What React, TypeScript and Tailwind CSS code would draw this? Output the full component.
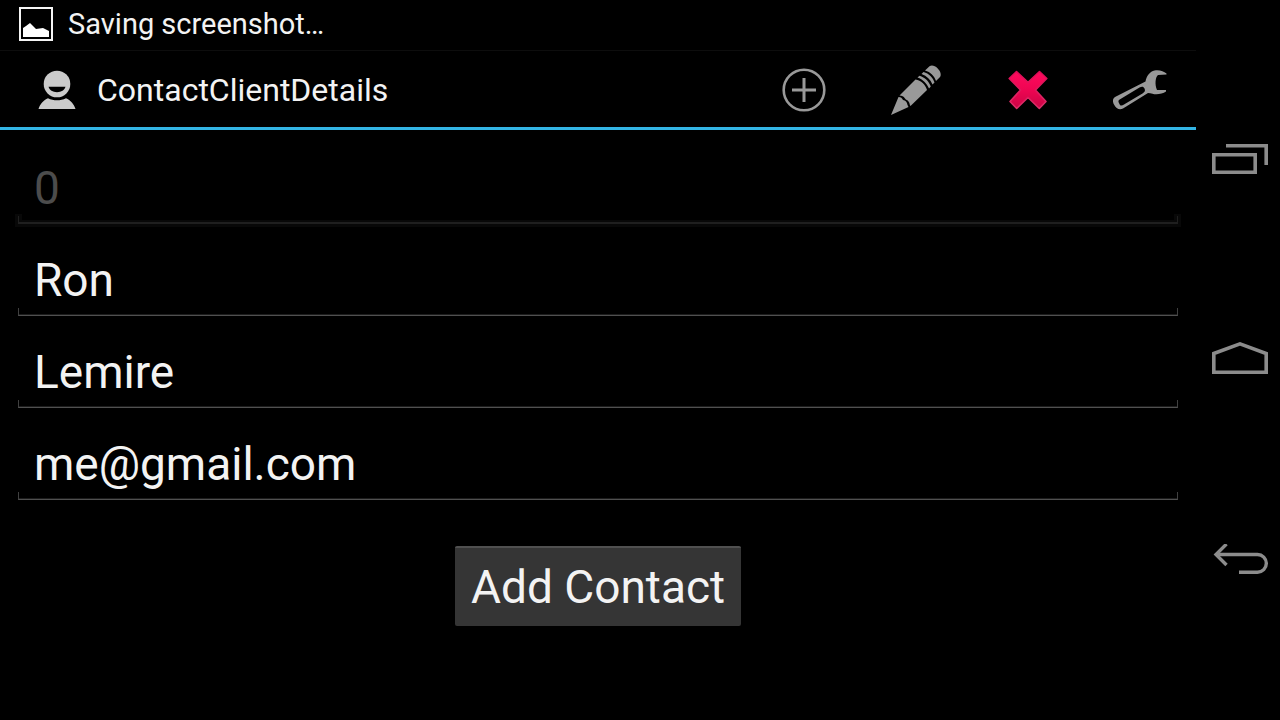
import React from "react";

type FieldProps = {
  label: string;
  value: string;
  type?: string;
  disabled?: boolean;
};

function Field({ label, value, type = "text", disabled = false }: FieldProps) {
  return (
    <div className="flex h-[92px] flex-col justify-end">
      <input
        aria-label={label}
        type={type}
        defaultValue={value}
        disabled={disabled}
        className="h-16 w-full bg-transparent px-4 pt-2 text-[46px] leading-[56px] text-[#f3f3f3] outline-none disabled:text-[#4c4c4c]"
      />
      <div
        className={
          disabled
            ? "h-2 border-x border-b-2 border-[#1f1f1f] [filter:drop-shadow(0_2px_0_#080808)_drop-shadow(0_-2px_0_#080808)_drop-shadow(0_1px_0_#080808)_drop-shadow(2px_0_0_#080808)_drop-shadow(-2px_0_0_#080808)_drop-shadow(1px_0_0_#080808)_drop-shadow(-1px_0_0_#080808)]"
            : "h-2 border-x border-b border-x-[#404040] border-b-[#505050] shadow-[inset_0_-1px_0_#1c1c1c]"
        }
      />
    </div>
  );
}

function PictureIcon() {
  return (
    <svg width="34" height="34" viewBox="0 0 34 34" aria-hidden="true">
      <rect x="1" y="1" width="32" height="32" fill="none" stroke="#f5f5f5" strokeWidth="2" />
      <path d="M4 30V21L7 19L11 16L15 20L17 22L24 21L28 23L30 24V30Z" fill="#fff" />
    </svg>
  );
}

function PersonIcon() {
  return (
    <svg width="40" height="40" viewBox="0 0 40 40" aria-hidden="true">
      <circle cx="20" cy="14" r="13.3" fill="#cbcbcb" />
      <path d="M11.500 16.800H28.500C27.500 20.200 24.300 22.200 20 22.200S12.500 20.200 11.500 16.800Z" fill="#000" />
      <path d="M1.500 39C3 34 6.500 30 11 28.200C16.500 31 23.500 31 29 28.200C33.500 30 37 34 38.500 39Z" fill="#cbcbcb" />
    </svg>
  );
}

function AddIcon() {
  return (
    <svg width="44" height="44" viewBox="0 0 44 44" aria-hidden="true" fill="none" stroke="#999">
      <circle cx="22" cy="22" r="20.300" strokeWidth="2.600" />
      <path d="M22 10V34M10 22H34" strokeWidth="3" />
    </svg>
  );
}

function PencilIcon() {
  return (
    <svg width="52" height="52" viewBox="0 0 52 52" aria-hidden="true" fill="#999">
      <path d="M1 51L8.500 33C11 33 12 34 13 36C15.500 36.500 17 38 17.500 41L18.500 43Z" />
      <path d="M9.500 31.500L25.500 15.500C31 16.500 35.500 20.500 37 26L20.500 42C19.500 41.500 20 39 18.500 37.500C17.500 36 16 36 15 34.500C13.500 32 12 32 9.500 31.500Z" />
      <path d="M27.500 13.500L29.500 11.800C35 13.500 39 17.500 40.800 22.500L39 24.500C36.500 19 33 15.500 27.500 13.500Z" />
      <path d="M31.500 10L33.500 8C39 9.500 43 13.500 44.500 18.500L42.500 20.500C40.500 15.500 37 12 31.500 10Z" />
      <path d="M35 6.500L39.500 2.200C41.500 .8 45 1.500 47.500 4.200C50.500 7.200 51.800 11 49.800 13.300L46 17C44.500 12 40.500 8 35 6.500Z" />
    </svg>
  );
}

function DeleteIcon() {
  return (
    <svg width="40" height="40" viewBox="0 0 40 40" aria-hidden="true">
      <defs>
        <linearGradient id="cross-fill" x1="0" y1="0" x2="0" y2="1">
          <stop offset="0" stopColor="#ff0a5e" />
          <stop offset="0.500" stopColor="#ee0552" />
          <stop offset="1" stopColor="#c90545" />
        </linearGradient>
        <linearGradient id="cross-edge" x1="0" y1="0" x2="0" y2="1">
          <stop offset="0" stopColor="#e00a55" />
          <stop offset="1" stopColor="#dc2f69" />
        </linearGradient>
      </defs>
      <path
        d="M8.500 1.500L20 12.300L31.500 1.500L38.800 8.500L27.500 20L38 31.500L31.300 38.500L20 27.500L8.700 38.500L2 31.500L12.500 20L1.200 8.500Z"
        fill="url(#cross-fill)"
        stroke="url(#cross-edge)"
        strokeLinejoin="round"
        strokeWidth="1.600"
      />
    </svg>
  );
}

function WrenchIcon() {
  return (
    <svg width="56" height="42" viewBox="0 0 56 42" aria-hidden="true">
      <path
        fill="#999"
        fillRule="evenodd"
        d="M54.500 4.500V5.500L46 6C43.500 8 42.500 15 45 21H54V22.500C50.500 25 44.500 26 40.500 24.800C39 24.500 37.500 24 36 24L11 39.500C7.500 41.500 4 39.500 2 35.500C.5 32.500 .5 29.500 3 28L33.500 12.500C34.500 7 38 2.500 42.500 1.500C47 .5 51.500 2 54.500 4.500ZM8.500 30C6.500 31 6 32 6.800 33.800L8 36C9 37 10.500 36.500 12 35.500L30.500 24.500C33 23 33.500 21.500 32.500 19.500C31.500 17.500 30 17 27.500 18.500Z"
      />
    </svg>
  );
}

function App() {
  return (
    <div className="flex min-h-screen bg-black font-['Roboto','Liberation_Sans',sans-serif] text-[#f3f3f3]">
      <div className="flex min-w-0 flex-1 flex-col">
        <div className="flex h-[51px] items-center gap-[15px] border-b border-[#0d0d0d] pb-0.5 pl-[19px]">
          <PictureIcon />
          <span className="text-[29px] leading-8">Saving screenshot…</span>
        </div>

        <header className="flex h-[79px] items-center border-b-[3px] border-[#33b5e5] pt-0.5 pl-[37px]">
          <PersonIcon />
          <h1 className="ml-5 flex-1 text-[32px] leading-10">ContactClientDetails</h1>
          <div className="flex h-full">
            <button type="button" aria-label="Add" className="flex w-28 items-center justify-center">
              <AddIcon />
            </button>
            <button type="button" aria-label="Edit" className="flex w-28 items-center justify-center">
              <PencilIcon />
            </button>
            <button type="button" aria-label="Delete" className="flex w-28 items-center justify-center">
              <DeleteIcon />
            </button>
            <button type="button" aria-label="Settings" className="flex w-28 items-center justify-center">
              <WrenchIcon />
            </button>
          </div>
        </header>

        <form className="flex flex-col px-[18px] pt-0.5" onSubmit={(e) => e.preventDefault()}>
          <Field label="Id" value="0" disabled />
          <Field label="First name" value="Ron" />
          <Field label="Last name" value="Lemire" />
          <Field label="Email" value="me@gmail.com" type="email" />
          <button
            type="submit"
            className="mt-[46px] h-20 self-center rounded-xs border-t-2 border-[#505050] bg-[#353535] px-4 text-[46px] leading-[56px]"
          >
            Add Contact
          </button>
        </form>
      </div>

      <nav className="flex w-[84px] flex-col items-center justify-between pl-1 pt-32 pb-32">
        <button type="button" aria-label="Recent apps" className="flex h-16 w-full items-center justify-center">
          <svg width="58" height="32" viewBox="0 0 58 32" aria-hidden="true" fill="none" stroke="#8c8c8c" strokeWidth="3.600">
            <path d="M15 1.800H55.200V21" />
            <path d="M2.800 10.800H44.200V28.200H2.800Z" />
          </svg>
        </button>
        <button type="button" aria-label="Home" className="flex h-16 w-full items-center justify-center">
          <svg width="58" height="36" viewBox="0 0 58 36" aria-hidden="true" fill="none" stroke="#8c8c8c" strokeWidth="3.600">
            <path d="M2.800 11.500L29 1.900L55.200 11.500V30.200H2.800Z" />
          </svg>
        </button>
        <button type="button" aria-label="Back" className="flex h-16 w-full items-center justify-center">
          <svg width="58" height="32" viewBox="0 0 58 32" aria-hidden="true" fill="none" stroke="#8c8c8c" strokeWidth="3.400">
            <path d="M15.500 0L5 10.500L15.500 21" />
            <path d="M5 10.500H46.500A8.800 8.800 0 0 1 46.500 28.200H28" />
          </svg>
        </button>
      </nav>
    </div>
  );
}

export default App;
